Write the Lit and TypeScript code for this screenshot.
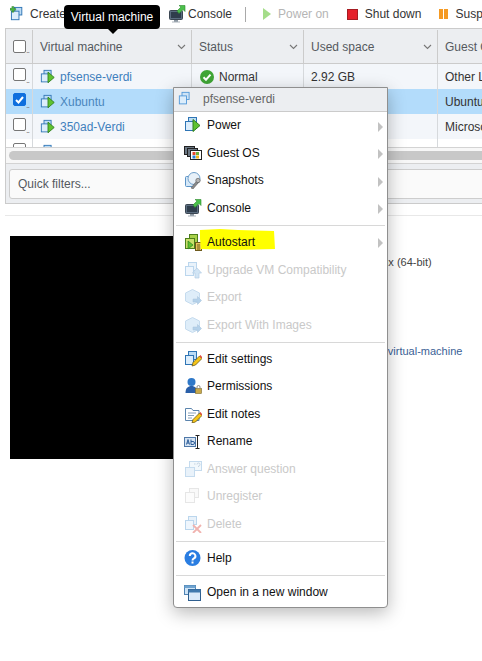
import { LitElement, html, svg, css, nothing } from 'lit';
import { customElement } from 'lit/decorators.js';

const squares = (c = '#2f75b5', f = '#bcdcf5') => svg`
  <rect x="4.5" y="1.5" width="8" height="8" fill="${f}" stroke="${c}"/>
  <rect x="1.5" y="5.5" width="8" height="9" fill="#dcedfb" stroke="${c}"/>`;

const monitor = svg`
  <rect x="1.5" y="5.5" width="13" height="9" rx="1" fill="#5b6d80" stroke="#3b4652"/>
  <rect x="3" y="7" width="10" height="6" fill="#2f3d4c"/>
  <rect x="6" y="15" width="4" height="2" fill="#8b96a1"/>
  <rect x="4" y="16.5" width="8" height="1" fill="#aab2ba"/>`;

const icons: Record<string, unknown> = {
  create: svg`${squares()}
    <path d="M1 3.5h2v-2h2v2h2v2h-2v2h-2v-2h-2z" transform="translate(-1 -1)" fill="#4bb543" stroke="#2d7d2a" stroke-width=".5"/>`,
  vm: svg`${squares()}
    <path d="M9 3.5l7 6-7 6z" fill="#5fc22f" stroke="#2f7f1f"/>`,
  vmPlain: svg`${squares('#4f97d8', '#cfe4f6')}`,
  console: svg`${monitor}
    <path d="M9 6l4-4-2-1.500h6v6l-2-2-4 4z" fill="#4bc04b" stroke="#2c8a2c" stroke-width=".6"/>`,
  guest: svg`
    <rect x="0.500" y="2.500" width="10" height="8" fill="#6b7885" stroke="#222"/>
    <rect x="3.500" y="4.500" width="10" height="8" fill="#6b7885" stroke="#222"/>
    <rect x="6.500" y="6.500" width="11" height="9" fill="#fff" stroke="#222"/>
    <rect x="8.500" y="8" width="3" height="3" fill="#e5492e"/>
    <rect x="12" y="8" width="3" height="3" fill="#6cb33f"/>
    <rect x="8.500" y="11.500" width="3" height="3" fill="#2b7fd6"/>
    <rect x="12" y="11.500" width="3" height="3" fill="#f5b81c"/>`,
  snapshots: svg`
    <rect x="1.500" y="5.500" width="9" height="10" rx="1" fill="#d5e8f8" stroke="#5b93c7"/>
    <circle cx="10" cy="7.500" r="6" fill="#e8f1f9" stroke="#6f9fca"/>
    <path d="M7 17l6-7.500 2 1.500-6 7z" fill="#8b8b8b" stroke="#555" stroke-width=".5"/>
    <circle cx="14" cy="9.500" r="2.200" fill="#b5b5b5" stroke="#555" stroke-width=".6"/>`,
  autostart: svg`
    <rect x="5.500" y="1.500" width="8" height="8" fill="#a8d04a" stroke="#4d7f1c"/>
    <rect x="1.500" y="5.500" width="9" height="10" fill="#c9e06b" stroke="#4d7f1c"/>
    <path d="M4 8l5 4-5 4z" fill="#5fc22f" stroke="#2f7f1f" stroke-width=".7"/>
    <rect x="11.500" y="9.500" width="6" height="8" fill="#e6c65a" stroke="#6e5a1c"/>
    <path d="M13 12h3M13 14h3M13 16h3" stroke="#6e5a1c"/>`,
  upgrade: svg`${squares('#6aa5d8', '#cfe4f6')}
    <path d="M13 7l4.500 5h-2.500v5h-4v-5h-2.500z" fill="#9cc7ea" stroke="#5b93c7" stroke-width=".7"/>`,
  export: svg`
    <path d="M1.500 5l7-3.500 7 3.500v8l-7 3.500-7-3.500z" fill="#b8d8f2" stroke="#7fb0da"/>
    <path d="M9 11h4.500v-2.500l4 4-4 4v-2.500h-4.500z" fill="#5b9ad2" stroke="#3b78b0" stroke-width=".5"/>`,
  settings: svg`${squares()}
    <path d="M8 16l1-3.500 6.500-6.500 2.500 2.500-6.500 6.500z" fill="#f5c518" stroke="#5a4a10" stroke-width=".7"/>
    <path d="M15.500 6l1-1 2 2.500-1 1z" fill="#e0463c"/>`,
  permissions: svg`
    <circle cx="7.500" cy="5" r="4" fill="#2f78c8"/>
    <path d="M1.500 16c0-5 2.500-7 6-7s6 2 6 7z" fill="#2a5fa8"/>
    <rect x="11.500" y="11.500" width="6" height="5" fill="#c9a94a" stroke="#7d6a2a" stroke-width=".6"/>
    <path d="M13 11.500v-1.500a1.500 1.500 0 0 1 3 0v1.500" fill="none" stroke="#8a8a8a"/>`,
  notes: svg`
    <path d="M1.500 3.500h6l1.500 2h6v10h-13.500z" fill="#fff" stroke="#5b84ad"/>
    <path d="M4 8h8M4 10.500h6M4 13h4" stroke="#8aa3bb"/>
    <path d="M8 18l1-3.500 6.500-6.500 2.500 2.500-6.500 6.500z" fill="#f5c518" stroke="#5a4a10" stroke-width=".7"/>
    <path d="M15.500 8l1-1 2 2.500-1 1z" fill="#e0463c"/>`,
  rename: svg`
    <rect x="0.500" y="5.500" width="11" height="9" fill="#d5e3f2" stroke="#4f78a8"/>
    <path d="M2.500 12.500l1.500-5 1.500 5M3 11h2M7 7.500v5h2a1.200 1.200 0 0 0 0-3h-2" fill="none" stroke="#2f5f9a"/>
    <path d="M11.500 3.500h4M11.500 16.500h4M13.500 3.500v13" stroke="#222" fill="none"/>`,
  answer: svg`
    <rect x="5.500" y="1.500" width="12" height="9" fill="#e4f0fa" stroke="#7fb0da"/>
    <rect x="1.500" y="7.500" width="9" height="9" fill="#cfe4f6" stroke="#7fb0da"/>
    <path d="M10 4h1.500M13 4.500a1.500 1.500 0 1 1 1.500 1.500v1" stroke="#7f9fbb" fill="none"/>`,
  unregister: svg`
    <rect x="5.500" y="1.500" width="9" height="9" fill="#f2f2f2" stroke="#c8c8c8"/>
    <rect x="1.500" y="5.500" width="9" height="10" fill="#fafafa" stroke="#c8c8c8"/>`,
  delete: svg`${squares('#6aa5d8', '#cfe4f6')}
    <path d="M9 10l8 8M17 10l-8 8" stroke="#e0584f" stroke-width="1.800"/>`,
  help: svg`
    <circle cx="8.500" cy="9" r="8" fill="#2a7de1"/>
    <path d="M5.800 7a2.800 2.800 0 1 1 4.200 2.400c-1 .6-1.500 1-1.500 2.100" fill="none" stroke="#fff" stroke-width="2"/>
    <rect x="7.500" y="12.500" width="2" height="2" fill="#fff"/>`,
  window: svg`
    <rect x="0.500" y="2.500" width="11" height="9" fill="#cfe4f6" stroke="#4f84b5"/>
    <rect x="0.500" y="2.500" width="11" height="2.500" fill="#6fa3d0"/>
    <rect x="4.500" y="6.500" width="12" height="11" fill="#d9eafa" stroke="#2f5f8f"/>
    <rect x="4.500" y="6.500" width="12" height="3" fill="#3f79ad"/>`,
};

const icon = (name: string, size = 18) => html`<svg
  class="icon"
  width=${size}
  height=${size}
  viewBox="0 0 18 18"
>${icons[name]}</svg>`;

interface MenuItem {
  label?: string;
  icon?: string;
  off?: boolean;
  more?: boolean;
  mark?: boolean;
}

const MENU: MenuItem[] = [
  { label: 'Power', icon: 'vm', more: true },
  { label: 'Guest OS', icon: 'guest', more: true },
  { label: 'Snapshots', icon: 'snapshots', more: true },
  { label: 'Console', icon: 'console', more: true },
  {},
  { label: 'Autostart', icon: 'autostart', more: true, mark: true },
  { label: 'Upgrade VM Compatibility', icon: 'upgrade', off: true },
  { label: 'Export', icon: 'export', off: true },
  { label: 'Export With Images', icon: 'export', off: true },
  {},
  { label: 'Edit settings', icon: 'settings' },
  { label: 'Permissions', icon: 'permissions' },
  { label: 'Edit notes', icon: 'notes' },
  { label: 'Rename', icon: 'rename' },
  { label: 'Answer question', icon: 'answer', off: true },
  { label: 'Unregister', icon: 'unregister', off: true },
  { label: 'Delete', icon: 'delete', off: true },
  {},
  { label: 'Help', icon: 'help' },
  {},
  { label: 'Open in a new window', icon: 'window' },
];

const ROWS = [
  { name: 'pfsense-verdi', status: 'Normal', space: '2.92 GB', guest: 'Other Linux (64-bit)' },
  { name: 'Xubuntu', status: '', space: '', guest: 'Ubuntu Linux (64-bit)', selected: true },
  { name: '350ad-Verdi', status: '', space: '', guest: 'Microsoft Windows' },
  { name: '', status: '', space: '', guest: '', blank: true },
];

@customElement('app-root')
export class AppRoot extends LitElement {
  static styles = css`
    :host {
      display: block;
      position: relative;
      width: 482px;
      height: 661px;
      overflow: hidden;
      background: #fff;
      font-family: 'Liberation Sans', Arial, sans-serif;
      font-size: 12px;
      color: #333;
    }
    .icon {
      display: block;
      flex: none;
    }

    .toolbar {
      display: flex;
      align-items: center;
      height: 28px;
      padding-left: 10px;
      white-space: nowrap;
    }
    .tool {
      display: flex;
      flex: none;
      align-items: center;
      gap: 3px;
      margin-right: 18px;
    }
    .tool.create {
      width: 140px;
    }
    .tool.console {
      gap: 2px;
    }
    .tool.off {
      color: #b5b5b5;
    }
    .tool-sep {
      flex: none;
      width: 1px;
      height: 15px;
      background: #a9a9a9;
      margin: 0 17px 0 -5px;
    }
    .stop {
      width: 9px;
      height: 9px;
      background: #e5202a;
      border: 0.5px solid #a51c22;
      margin-right: 4px;
    }
    .pause {
      display: flex;
      gap: 1px;
      margin-right: 4px;
    }
    .pause i {
      width: 4px;
      height: 10px;
      background: #f59a23;
    }
    .play {
      width: 0;
      height: 0;
      border-left: 8px solid #a5dd8a;
      border-top: 6px solid transparent;
      border-bottom: 6px solid transparent;
      margin-right: 4px;
    }

    .grid {
      margin-left: 5px;
      border: 1px solid #cbcbcb;
      border-right: 0;
      width: 520px;
    }
    .row {
      display: grid;
      grid-template-columns: 27px 159px 112px 134px 1fr;
      height: 25px;
      align-items: center;
      background: #f3f6fa;
    }
    .row.selected {
      background: #b3dcfb;
    }
    .row.blank {
      background: #fff;
    }
    .row.head {
      height: 33px;
      padding-top: 1px;
      background: #eceef1;
      border-bottom: 1px solid #cbcbcb;
      color: #55595e;
    }
    .cell {
      display: flex;
      align-items: center;
      height: 100%;
      padding-left: 7px;
      box-sizing: border-box;
      border-right: 1px solid #d6d9dc;
      overflow: hidden;
      white-space: nowrap;
      position: relative;
    }
    .row.head .cell {
      border-right-color: #cbcbcb;
      justify-content: space-between;
      padding-right: 5px;
    }
    .box {
      width: 13px;
      height: 13px;
      box-sizing: border-box;
      border: 1px solid #767676;
      border-radius: 2px;
      background: #fff;
      flex: none;
    }
    .body .box {
      margin-bottom: 4px;
    }
    .box.on {
      background: #0f6fde;
      border-color: #0f6fde;
      display: flex;
      align-items: center;
      justify-content: center;
    }
    .dots {
      font-size: 9px;
      color: #777;
      margin-top: 6px;
      letter-spacing: -1px;
    }
    .name {
      color: #3f80bd;
      margin-left: 4px;
    }
    .selected .name {
      color: #4a86bd;
    }
    .ok {
      width: 14px;
      height: 14px;
      margin: 0 5px 0 1px;
    }
    .chev {
      flex: none;
    }
    .body {
      height: 83px;
      overflow: hidden;
    }
    .scroll {
      height: 17px;
      border-top: 1px solid #d3d3d3;
      border-bottom: 1px solid #d3d3d3;
      padding: 3px 0 0 3px;
      box-sizing: border-box;
      background: #f7f7f7;
    }
    .thumb {
      height: 9px;
      border-radius: 5px;
      background: #c8c8c8;
    }
    .filters {
      background: #eceef1;
      height: 39px;
      padding: 5px 0 4px 3px;
      box-sizing: border-box;
    }
    .quick {
      height: 30px;
      box-sizing: border-box;
      border: 1px solid #cdcdcd;
      border-radius: 3px;
      background: #fafafa;
      padding-left: 8px;
      display: flex;
      align-items: center;
      color: #55595e;
    }
    .rule {
      margin: 11px 0 0 5px;
      height: 1px;
      background: #e8e8e8;
    }

    .details {
      display: flex;
      margin: 20px 0 0 10px;
    }
    .shot {
      width: 240px;
      height: 223px;
      background: #000;
      flex: none;
    }
    .facts {
      padding: 20px 0 0 79px;
      font-size: 11px;
      white-space: nowrap;
      display: flex;
      flex-direction: column;
      gap: 77px;
      color: #444;
    }
    .facts a {
      color: #3b5f96;
      margin-left: 16px;
    }

    .tip {
      position: absolute;
      left: 64px;
      top: 5px;
      width: 96px;
      height: 24px;
      background: #000;
      color: #fff;
      border-radius: 4px;
      display: flex;
      align-items: center;
      justify-content: center;
    }
    .tip::after {
      content: '';
      position: absolute;
      left: 44px;
      top: 24px;
      border: 5px solid transparent;
      border-top-color: #000;
      border-bottom: 0;
    }

    .menu {
      position: absolute;
      left: 173px;
      top: 87px;
      width: 215px;
      height: 521px;
      box-sizing: border-box;
      background: #fff;
      border: 1px solid #8f8f8f;
      border-radius: 0 0 4px 4px;
      box-shadow: 0 5px 18px rgba(0, 0, 0, 0.28);
      color: #111;
    }
    .menu-head {
      height: 23.5px;
      background: #eceef1;
      border-bottom: 1px solid #cbcbcb;
      display: flex;
      align-items: center;
      padding-left: 4px;
      gap: 9px;
      color: #666;
      box-sizing: border-box;
    }
    .item {
      position: relative;
      display: flex;
      align-items: center;
      height: 27.5px;
      padding-left: 10px;
      gap: 5px;
    }
    .item.off {
      color: #c9c9c9;
    }
    .item.off .icon {
      opacity: 0.45;
    }
    .item .label {
      position: relative;
    }
    .mark {
      position: absolute;
      left: 25px;
      top: 0;
      width: 76px;
      height: 22px;
    }
    .more {
      position: absolute;
      right: 4px;
      top: 10px;
      border-left: 5px solid #c2c2c2;
      border-top: 5px solid transparent;
      border-bottom: 5px solid transparent;
    }
    .sep {
      height: 1px;
      margin: 3.25px 2px 2.5px;
      background: #d8d8d8;
    }
  `;

  private chevron() {
    return html`<svg class="chev" width="9" height="6" viewBox="0 0 9 6">
      <path d="M1 1l3.500 3.500L8 1" fill="none" stroke="#777" stroke-width="1.100" />
    </svg>`;
  }

  private renderRow(r: (typeof ROWS)[number]) {
    return html`<div class="row ${r.selected ? 'selected' : ''} ${r.blank ? 'blank' : ''}">
      <div class="cell">
        ${r.selected
          ? html`<span class="box on">
              <svg width="9" height="8" viewBox="0 0 9 8">
                <path d="M1 4l2.500 2.500L8 1" fill="none" stroke="#fff" stroke-width="2" />
              </svg>
            </span>`
          : html`<span class="box"></span>`}
        <span class="dots">..</span>
      </div>
      <div class="cell">${icon('vm', 16)}<span class="name">${r.name}</span></div>
      <div class="cell">
        ${r.status
          ? html`<svg class="ok" viewBox="0 0 14 14">
                <circle cx="7" cy="7" r="7" fill="#3fa535" />
                <path d="M3.500 7.200l2.500 2.500 4.500-5" fill="none" stroke="#fff" stroke-width="2" />
              </svg>
              ${r.status}`
          : nothing}
      </div>
      <div class="cell">${r.space}</div>
      <div class="cell">${r.guest}</div>
    </div>`;
  }

  private renderItem(m: MenuItem) {
    if (!m.label) return html`<div class="sep"></div>`;
    return html`<div class="item ${m.off ? 'off' : ''}">
      ${m.mark
        ? html`<svg class="mark" viewBox="0 0 76 22" preserveAspectRatio="none">
            <path d="M1 2l20-1 18 1 36 1 1 18-40 1-34-1-1-10z" fill="#ffff00" />
          </svg>`
        : nothing}
      ${icon(m.icon!)}
      <span class="label">${m.label}</span>
      ${m.more ? html`<span class="more"></span>` : nothing}
    </div>`;
  }

  render() {
    return html`
      <div class="toolbar">
        <div class="tool create">${icon('create', 17)}Create / Register VM</div>
        <div class="tool console">${icon('console')}Console</div>
        <div class="tool-sep"></div>
        <div class="tool off"><span class="play"></span>Power on</div>
        <div class="tool"><span class="stop"></span>Shut down</div>
        <div class="tool"><span class="pause"><i></i><i></i></span>Suspend</div>
      </div>

      <div class="grid">
        <div class="row head">
          <div class="cell"><span class="box"></span><span class="dots">..</span></div>
          <div class="cell">Virtual machine ${this.chevron()}</div>
          <div class="cell">Status ${this.chevron()}</div>
          <div class="cell">Used space ${this.chevron()}</div>
          <div class="cell">Guest OS</div>
        </div>
        <div class="body">${ROWS.map((r) => this.renderRow(r))}</div>
        <div class="scroll"><div class="thumb"></div></div>
        <div class="filters"><div class="quick">Quick filters...</div></div>
      </div>
      <div class="rule"></div>

      <div class="details">
        <div class="shot"></div>
        <div class="facts">
          <span>Ubuntu Linux (64-bit)</span>
          <a>xubuntu-virtual-machine</a>
        </div>
      </div>

      <div class="tip">Virtual machine</div>

      <div class="menu">
        <div class="menu-head">${icon('vmPlain', 16)}pfsense-verdi</div>
        ${MENU.map((m) => this.renderItem(m))}
      </div>
    `;
  }
}
